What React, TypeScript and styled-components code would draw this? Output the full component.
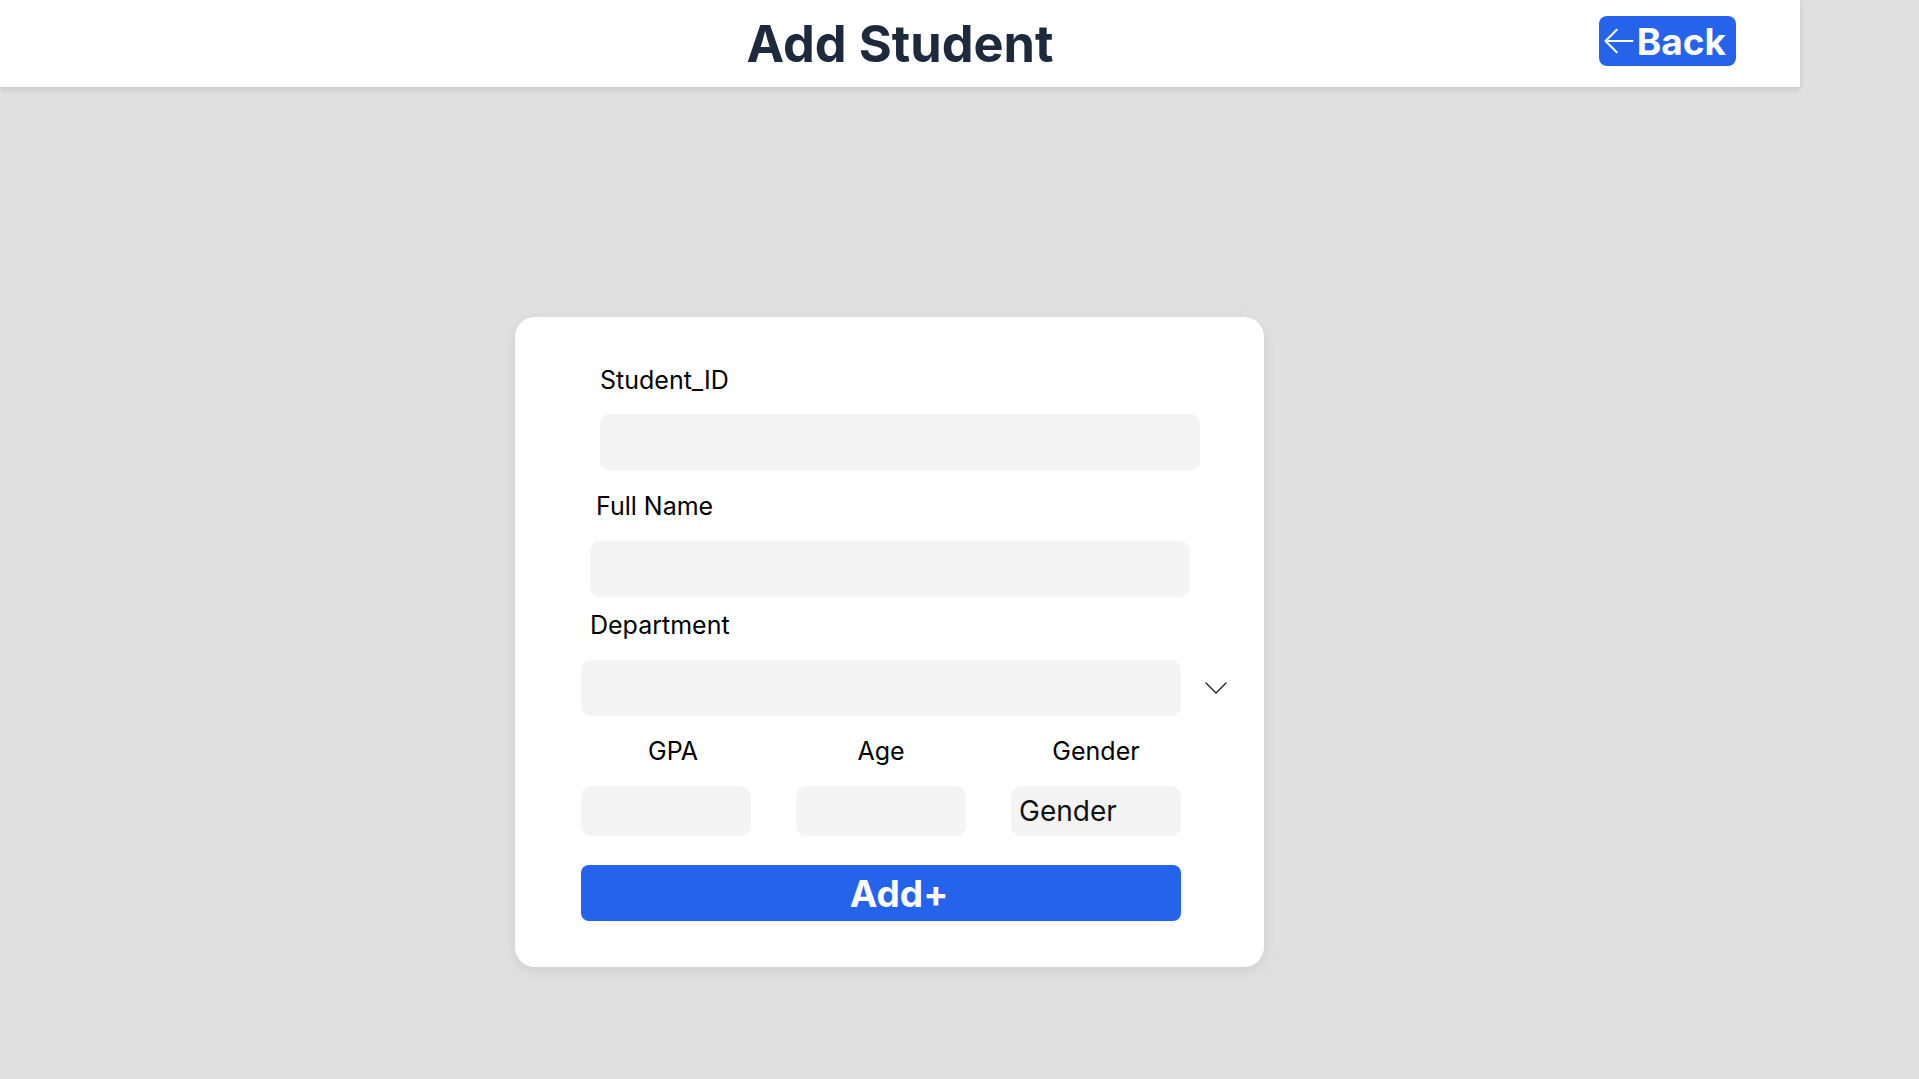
import React from "react";
import styled, { createGlobalStyle } from "styled-components";

const GlobalStyle = createGlobalStyle`
  html, body {
    margin: 0;
    padding: 0;
    background: #e0e0e0;
    font-family: Inter, "Noto Sans", sans-serif;
  }
  * { box-sizing: border-box; }
`;

const Page = styled.div`
  width: 1919px;
  min-height: 1079px;
  background: #e0e0e0;
`;

const Header = styled.header`
  width: 1800px;
  height: 87px;
  background: #ffffff;
  box-shadow: 0 2px 6px rgba(0, 0, 0, 0.12);
  display: grid;
  grid-template-columns: 1fr auto 1fr;
  align-items: center;
  position: relative;
  z-index: 1;
`;

const Title = styled.h1`
  grid-column: 2;
  margin: 2px 0 0;
  font-size: 50.5px;
  font-weight: 700;
  color: #1e293b;
  line-height: 1;
`;

const BackButton = styled.button`
  grid-column: 3;
  justify-self: end;
  margin: 0 64px 5px 0;
  display: flex;
  align-items: center;
  height: 50px;
  padding: 0 10px 0 2px;
  border: none;
  border-radius: 8px;
  background: #2563eb;
  color: #ffffff;
  font-family: Inter, sans-serif;
  font-size: 37px;
  font-weight: 700;
  cursor: pointer;
`;

const Main = styled.main`
  width: 1800px;
  display: flex;
  justify-content: center;
  padding-top: 230px;
`;

const Card = styled.form`
  width: 749px;
  height: 650px;
  margin-right: 21px;
  background: #ffffff;
  border-radius: 20px;
  box-shadow: 0 4px 14px rgba(0, 0, 0, 0.08);
  padding: 48px 0 46px;
  display: flex;
  flex-direction: column;
`;

const Label = styled.label<{ $inset: number; $top: number }>`
  display: block;
  margin: ${(p) => p.$top}px 0 0 ${(p) => p.$inset}px;
  font-size: 25px;
  line-height: 30px;
  font-weight: 400;
  color: #000000;
`;

const TextInput = styled.input<{ $inset: number; $h: number; $top: number }>`
  display: block;
  width: 600px;
  height: ${(p) => p.$h}px;
  margin: ${(p) => p.$top}px 0 0 ${(p) => p.$inset}px;
  border: none;
  outline: none;
  border-radius: 10px;
  background: #f4f4f4;
  font-family: Inter, sans-serif;
  font-size: 24px;
  padding: 0 10px;
`;

const SelectRow = styled.div`
  display: flex;
  align-items: center;
  margin: 20px 0 0 66px;
`;

const Select = styled.select`
  width: 600px;
  height: 56px;
  border: none;
  outline: none;
  appearance: none;
  border-radius: 10px;
  background: #f4f4f4;
  font-family: Inter, sans-serif;
  font-size: 24px;
  color: #000;
`;

const Chevron = styled.svg`
  margin-left: 24px;
  width: 22px;
  height: 12px;
`;

const SmallGrid = styled.div`
  display: grid;
  grid-template-columns: repeat(3, 170px);
  column-gap: 45px;
  row-gap: 20px;
  margin: 20px 0 0 66px;
`;

const SmallLabel = styled.label<{ $shift?: number }>`
  text-align: center;
  padding-left: ${(p) => (p.$shift ?? 0) * 2}px;
  font-size: 25px;
  line-height: 30px;
  color: #000000;
`;

const SmallInput = styled.input`
  width: 170px;
  height: 50px;
  border: none;
  outline: none;
  border-radius: 10px;
  background: #f4f4f4;
  font-family: Inter, sans-serif;
  font-size: 28px;
  color: #111;
  padding: 0 8px;
  &::placeholder {
    color: #111;
    opacity: 1;
  }
`;

const AddButton = styled.button`
  width: 600px;
  height: 56px;
  margin: 29px 0 0 66px;
  padding: 0 0 0 36px;
  border: none;
  border-radius: 8px;
  background: #2563eb;
  color: #ffffff;
  font-family: Inter, sans-serif;
  font-size: 37px;
  font-weight: 700;
  cursor: pointer;
`;

export default function App() {
  return (
    <Page>
      <GlobalStyle />
      <Header>
        <Title>Add Student</Title>
        <BackButton type="button">
          <svg width="36" height="36" viewBox="0 0 24 24" fill="none" stroke="#ffffff" strokeWidth="1.4" strokeLinecap="round" strokeLinejoin="round">
            <path d="M10.5 19.5 3 12l7.5-7.5M3 12h18" />
          </svg>
          Back
        </BackButton>
      </Header>
      <Main>
        <Card onSubmit={(e) => e.preventDefault()}>
          <Label $inset={85} $top={0}>Student_ID</Label>
          <TextInput $inset={85} $h={57} $top={19} />
          <Label $inset={81} $top={20}>Full Name</Label>
          <TextInput $inset={75} $h={56} $top={20} />
          <Label $inset={75} $top={13}>Department</Label>
          <SelectRow>
            <Select defaultValue="">
              <option value=""></option>
            </Select>
            <Chevron viewBox="0 0 22 12" fill="none" stroke="#222" strokeWidth="1.4" strokeLinecap="round" strokeLinejoin="round">
              <polyline points="1,1 11,11 21,1" />
            </Chevron>
          </SelectRow>
          <SmallGrid>
            <SmallLabel $shift={7}>GPA</SmallLabel>
            <SmallLabel>Age</SmallLabel>
            <SmallLabel>Gender</SmallLabel>
            <SmallInput />
            <SmallInput />
            <SmallInput placeholder="Gender" />
          </SmallGrid>
          <AddButton type="submit">Add+</AddButton>
        </Card>
      </Main>
    </Page>
  );
}
